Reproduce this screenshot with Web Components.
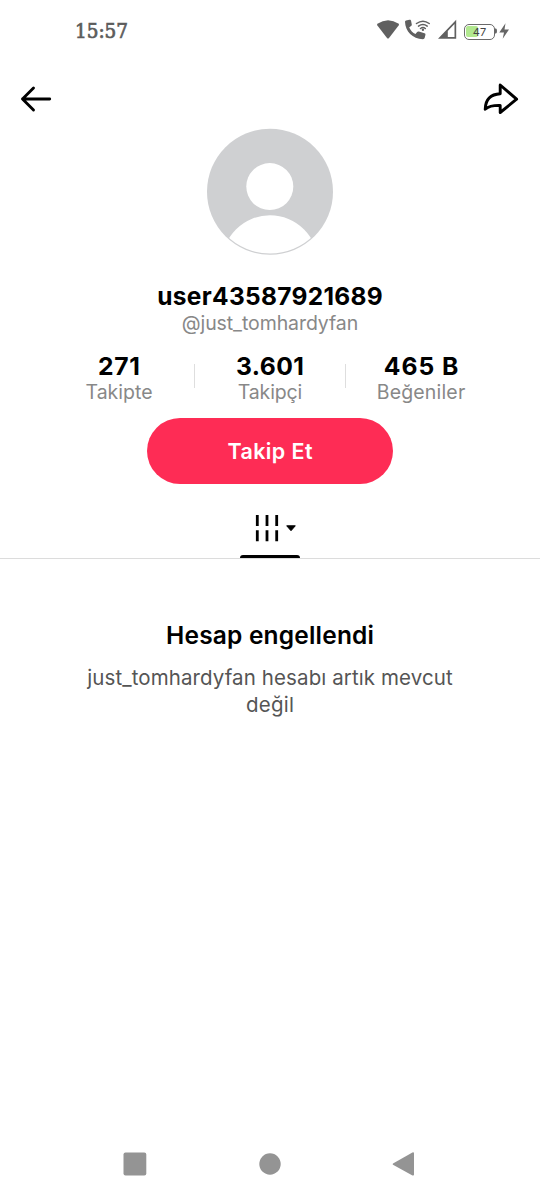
<!DOCTYPE html>
<html lang="tr">
<head>
<meta charset="utf-8">
<title>Profil</title>
<style>
html,body{margin:0;background:#fff}
body{font-family:Inter,"Noto Sans",sans-serif;color:#000}
</style>
</head>
<body>
<profile-screen></profile-screen>
<script>
const define=(name,html,ready)=>customElements.define(name,class extends HTMLElement{
  constructor(){super();this.attachShadow({mode:'open'}).innerHTML=html}
  connectedCallback(){if(ready)ready.call(this,this.shadowRoot)}
});

// Tracks a single line of text out to the width given by its "w" attribute.
define('tracked-text','<style>:host{display:inline-block;white-space:nowrap}span{display:inline-block}</style><span><slot></slot></span>',function(root){
  const s=root.querySelector('span');
  const n=this.textContent.length;
  const ls=(Number(this.getAttribute('w'))-s.getBoundingClientRect().width)/(n-1);
  s.style.letterSpacing=ls+'px';
  s.style.marginRight=-ls+'px';
});

define('status-bar',`<style>
:host{display:flex;justify-content:space-between;align-items:center;height:62px;padding:0 29px 0 75px;box-sizing:border-box}
.time{font:20.5px/24px "DejaVu Serif Condensed","DejaVu Serif",serif;font-stretch:condensed;color:#5c5c5c;-webkit-text-stroke:.7px #5c5c5c}
.icons{display:flex;align-items:center}
svg{display:block}
.bat{box-sizing:border-box;width:31px;height:16px;border:1.6px solid #6a6a6a;border-radius:5px;padding:1.4px;margin:1px 0 0 6px;display:flex;position:relative}
.bat i{width:12px;background:#b1e88f;border-radius:2px}
.bat b{position:absolute;inset:0;font:400 11px/14px Inter,sans-serif;text-align:center;color:#444}
</style>
<div class="time"><tracked-text w="53">15:57</tracked-text></div>
<div class="icons">
<svg width="82" height="24" viewBox="376 19.500 82 24" fill="#606060">
<path d="M377.400 24.300Q388 17 398.800 24.300L399 25.500 389 38.600Q388 39.600 387 38.600L377 25.500Z"/>
<path d="M406 21.100l3.400-.9c1-.2 1.500.3 1.700 1.200l.7 3.500c.1.800-.2 1.300-.8 1.700l-1.800 1.300c1.400 3 3.500 5.200 6.300 6.600l1.600-1.900c.5-.6 1-.8 1.800-.6l5.600 1.800c.8.300 1.100.8.900 1.600l-.7 2.900c-.2.900-.8 1.400-1.800 1.400C412.600 39.500 405.300 31.900 405 22.300Q405 21.300 406 21.100Z"/>
<g fill="none" stroke="#606060" stroke-width="1.500" stroke-linecap="round"><path d="M416.500 24Q423 19.300 429.200 24M418.500 26.600Q423 23.300 427.200 26.600M420.500 29Q423 27.200 425.300 29"/></g><circle cx="422.900" cy="30.300" r="1.200"/>
<path fill-rule="evenodd" d="M438 39.200L456.200 20.300V39.200ZM447.800 37.500H454.500V24.600L447.800 31.600Z"/>
</svg>
<div class="bat"><i></i><b>47</b></div>
<svg width="16" height="22" viewBox="0 0 16 22"><path fill="#666" d="M0 8.500h1q1 .4 1 2.500t-1 2.500H0ZM10.500 3.200L4.300 12.500H9L7.700 18.800 14 9.400H9.500Z"/></svg>
</div>`);

define('top-actions',`<style>:host{display:flex;justify-content:space-between;align-items:center;height:66px;padding:4px 19px 0 18px;margin-top:2px;box-sizing:border-box}svg{display:block;fill:none;stroke:#000;stroke-linejoin:round}</style>
<svg width="36" height="30" viewBox="18 84 36 30" stroke-width="2.900" stroke-linecap="round"><path d="M33.500 88L22.500 99 33.500 110M22.500 99H49.700"/></svg>
<svg width="40" height="36" viewBox="481 81 40 36" stroke-width="2.900"><path d="M500.200 85L516.600 99.200 500.200 112.500V105.400C493.500 105.200 489 106 485.200 109.200C485.500 99.500 491 94.300 500.200 93.800Z"/></svg>`);

define('user-avatar',`<style>:host{display:block;width:128px;height:128px}svg{display:block}</style>
<svg width="128" height="128" viewBox="206 128 128 128"><defs><clipPath id="c"><circle cx="270" cy="191.500" r="62"/></clipPath></defs><circle cx="270" cy="191.700" r="63" fill="#cfd0d2"/><circle cx="269.800" cy="186.600" r="23.500" fill="#fff"/><circle cx="270" cy="263.500" r="48.200" fill="#fff" clip-path="url(#c)"/></svg>`);

define('stat-item',`<style>:host{display:flex;flex-direction:column;align-items:center;width:150px}
.n{font-weight:700;font-size:24.700px;line-height:29px}.l{font-size:19.500px;line-height:22px;color:#888}</style>
<div class="n"><slot name="value"></slot></div><div class="l"><slot></slot></div>`);

define('stat-row',`<style>:host{display:flex;justify-content:center;align-items:center;margin-top:17px}i{width:1px;height:24px;background:#dedede;margin-top:-3px}</style>
<stat-item><tracked-text slot="value" w="42">271</tracked-text><tracked-text w="67">Takipte</tracked-text></stat-item><i></i>
<stat-item><tracked-text slot="value" w="68">3.601</tracked-text><tracked-text w="64.500">Takipçi</tracked-text></stat-item><i></i>
<stat-item><tracked-text slot="value" w="74.500">465 B</tracked-text><tracked-text w="88.500">Beğeniler</tracked-text></stat-item>`);

define('follow-button',`<style>:host{display:block;margin-top:14.500px}button{display:block;width:246px;height:66px;border:0;padding:0;border-radius:33px;background:#fe2c55;color:#fff;font:600 21.500px/66px Inter,sans-serif}</style>
<button><slot></slot></button>`);

define('feed-tabs',`<style>:host{display:flex;justify-content:center;height:74px;margin-top:1.500px;align-self:stretch;box-sizing:border-box;border-bottom:1px solid #dcdcdc}
.tab{width:60px;display:flex;flex-direction:column;justify-content:space-between;align-items:center}
.bar{width:60px;height:3px;background:#000;border-radius:3px 3px 0 0}svg{display:block;margin-top:26px}</style>
<div class="tab"><svg width="60" height="36" viewBox="240 511 60 36"><path d="M257.300 515v11M267 515v11M276.700 515v11M257.300 530.300v11M267 530.300v11M276.700 530.300v11" stroke="#000" stroke-width="2.800"/><path d="M286.700 525.800H295.300L291 530.700Z" stroke="#000" stroke-width="1" stroke-linejoin="round"/></svg><div class="bar"></div></div>`);

define('empty-state',`<style>:host{display:flex;flex-direction:column;align-items:center;padding-top:61px}
h2{margin:0;font-size:24.500px;line-height:30px;font-weight:600}
p{margin:13.500px 0 0;font-size:20.500px;line-height:27px;color:#555;display:flex;flex-direction:column;align-items:center}</style>
<h2><tracked-text w="208">Hesap engellendi</tracked-text></h2>
<p><tracked-text w="365.500">just_tomhardyfan hesabı artık mevcut</tracked-text><tracked-text w="48">değil</tracked-text></p>`);

define('nav-bar',`<style>:host{display:grid;grid-template-columns:repeat(3,135px);justify-content:center;justify-items:center;align-items:center;height:72px}svg{display:block;fill:#949494}</style>
<svg width="26" height="26"><rect x="1.500" y="1.500" width="22.800" height="23" rx="2"/></svg>
<svg width="26" height="26"><circle cx="13" cy="13" r="10.700"/></svg>
<svg width="26" height="26"><path d="M1 12.400L20.400 1.500Q21.900.900 22 2.300V23.600Q21.900 25 20.500 24.400L1 13.800Q.3 13.100 1 12.400Z"/></svg>`);

define('profile-screen',`<style>:host{display:flex;flex-direction:column;height:1200px;width:540px;background:#fff}
.col{display:flex;flex-direction:column;align-items:center;margin-top:-2px}
.name{font-size:24.500px;font-weight:700;line-height:30px;margin-top:25px}
.handle{font-size:19.500px;line-height:24px;color:#888}
nav-bar{margin-top:auto}</style>
<status-bar></status-bar><top-actions></top-actions>
<div class="col"><user-avatar></user-avatar>
<div class="name"><tracked-text w="225.500">user43587921689</tracked-text></div>
<div class="handle"><tracked-text w="176.500">@just_tomhardyfan</tracked-text></div>
<stat-row></stat-row>
<follow-button><tracked-text w="85">Takip Et</tracked-text></follow-button>
<feed-tabs></feed-tabs></div>
<empty-state></empty-state><nav-bar></nav-bar>`);
</script>
</body>
</html>
